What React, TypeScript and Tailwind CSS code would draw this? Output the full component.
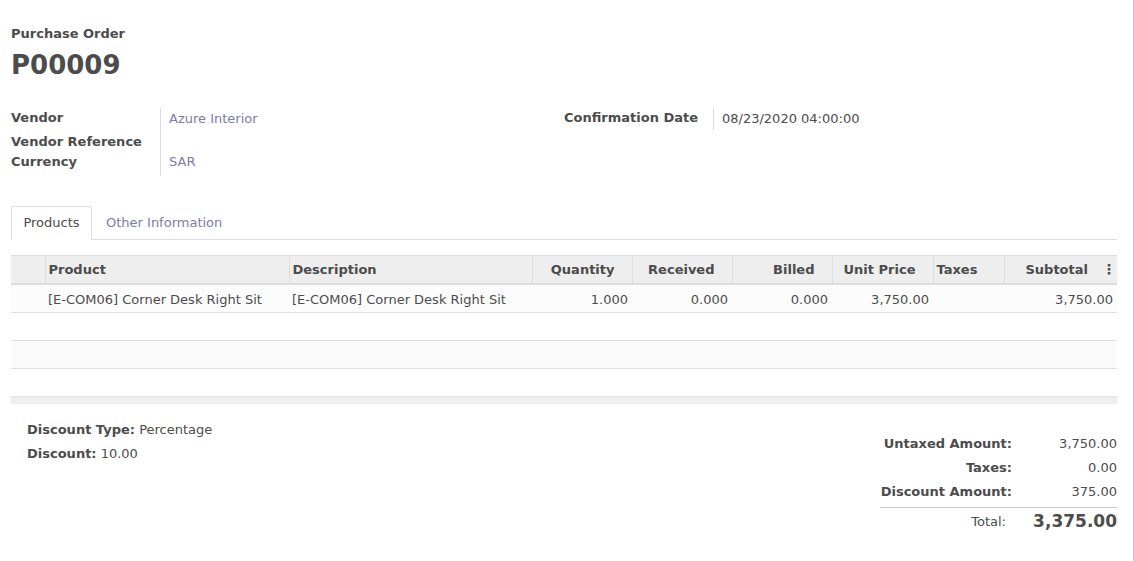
import React from "react";

const cols = [
  { key: "handle", label: "", w: "w-[34px]", align: "left" },
  { key: "product", label: "Product", w: "w-[244px]", align: "left" },
  { key: "description", label: "Description", w: "w-[243px]", align: "left" },
  { key: "qty", label: "Quantity", w: "w-[100px]", align: "right" },
  { key: "received", label: "Received", w: "w-[100px]", align: "right" },
  { key: "billed", label: "Billed", w: "w-[100px]", align: "right" },
  { key: "price", label: "Unit Price", w: "w-[101px]", align: "right" },
  { key: "taxes", label: "Taxes", w: "w-[71px]", align: "left" },
  { key: "subtotal", label: "Subtotal", w: "w-[113px]", align: "right" },
];

const line: Record<string, string> = {
  handle: "",
  product: "[E-COM06] Corner Desk Right Sit",
  description: "[E-COM06] Corner Desk Right Sit",
  qty: "1.000",
  received: "0.000",
  billed: "0.000",
  price: "3,750.00",
  taxes: "",
  subtotal: "3,750.00",
};

const FieldLabel = ({ children }: { children: React.ReactNode }) => (
  <div className="font-bold text-[#4c4c4c]">{children}</div>
);

const App = () => {
  return (
    <div
      className="min-h-[561px] w-[1134px] border-r border-[#c8c8c8] bg-white text-[13px] text-[#4c4c4c]"
      style={{ fontFamily: '"DejaVu Sans", "Noto Sans", sans-serif' }}
    >
      <div className="pl-[11px] pr-[16px] pt-[25px]">
        {/* title */}
        <div className="font-bold leading-[17px]">Purchase Order</div>
        <h1 className="mt-[8px] text-[26px] font-bold leading-[31px] text-[#4c4c4c]">P00009</h1>

        {/* header fields */}
        <div className="mt-[25px] flex">
          <div className="flex w-[553px]">
            <div className="w-[149px] shrink-0">
              <div className="flex h-[24px] items-center">
                <FieldLabel>Vendor</FieldLabel>
              </div>
              <div className="mt-[2px] flex h-[20px] items-center">
                <FieldLabel>Vendor Reference</FieldLabel>
              </div>
              <div className="flex h-[20px] items-center">
                <FieldLabel>Currency</FieldLabel>
              </div>
            </div>
            <div className="mt-[2px] h-[68px] border-l border-[#dcdcdc] pl-[8px]">
              <div className="flex h-[22px] items-center text-[#7c7bad]">Azure Interior</div>
              <div className="mt-[2px] h-[20px]" />
              <div className="flex h-[20px] items-center text-[#7c7bad]">SAR</div>
            </div>
          </div>
          <div className="flex">
            <div className="flex h-[24px] w-[149px] items-center">
              <FieldLabel>Confirmation Date</FieldLabel>
            </div>
            <div className="mt-[2px] flex h-[22px] items-center border-l border-[#dcdcdc] pl-[8px]">
              08/23/2020 04:00:00
            </div>
          </div>
        </div>

        {/* tabs */}
        <div className="mt-[30px] flex h-[34px] items-end border-b border-[#dddddd]">
          <div className="-mb-px flex h-[34px] w-[81px] items-center justify-center rounded-t-[3px] border border-b-white border-[#dddddd] bg-white">
            Products
          </div>
          <div className="flex h-[33px] items-center px-[14px] text-[#7c7bad]">Other Information</div>
        </div>

        {/* order lines */}
        <table className="mt-[15px] w-[1106px] table-fixed border-collapse">
          <thead>
            <tr className="h-[28px] border-t border-b-2 border-[#dcdcdc] bg-[#eeeeee]">
              {cols.map((c) => (
                <th
                  key={c.key}
                  className={`${c.w} border-l border-[#dddddd] px-[3px] font-bold first:border-l-0 ${
                    c.align === "right" ? "pr-[17px] text-right" : "text-left"
                  }`}
                >
                  {c.key === "subtotal" ? (
                    <div className="relative">
                      <span className="mr-[12px]">{c.label}</span>
                      <span className="absolute right-[-16px] top-[-1px] text-[14px] font-bold">⋮</span>
                    </div>
                  ) : (
                    c.label
                  )}
                </th>
              ))}
            </tr>
          </thead>
          <tbody>
            <tr className="h-[29px] border-b border-[#dee2e6] bg-[#fcfcfc]">
              {cols.map((c) => (
                <td
                  key={c.key}
                  className={`px-[3px] pt-[3px] ${c.align === "right" ? "pr-[4px] text-right" : "text-left"}`}
                >
                  {line[c.key]}
                </td>
              ))}
            </tr>
            <tr className="h-[28px] border-b border-[#dee2e6] bg-white">
              <td colSpan={9} />
            </tr>
            <tr className="h-[28px] border-b border-[#dee2e6] bg-[#fafafa]">
              <td colSpan={9} />
            </tr>
            <tr className="h-[28px] border-b border-[#dee2e6] bg-white">
              <td colSpan={9} />
            </tr>
          </tbody>
          <tfoot>
            <tr className="h-[7px] bg-[#eeeeee]">
              <td colSpan={9} />
            </tr>
          </tfoot>
        </table>

        {/* footer */}
        <div className="flex justify-between">
          <div className="pl-[16px] pt-[18px]">
            <div className="leading-[16px]">
              <span className="font-bold">Discount Type:</span> Percentage
            </div>
            <div className="mt-[8px] leading-[16px]">
              <span className="font-bold">Discount:</span> 10.00
            </div>
          </div>
          <div className="w-[237px] pt-[28px]">
            <div className="flex h-[24px] items-center justify-between">
              <span className="w-[132px] text-right font-bold">Untaxed Amount:</span>
              <span>3,750.00</span>
            </div>
            <div className="flex h-[24px] items-center justify-between">
              <span className="w-[132px] text-right font-bold">Taxes:</span>
              <span>0.00</span>
            </div>
            <div className="flex h-[25px] items-center justify-between">
              <span className="w-[132px] text-right font-bold">Discount Amount:</span>
              <span>375.00</span>
            </div>
            <div className="mt-[2px] flex h-[27px] items-center justify-between border-t border-[#cccccc] pt-[3px]">
              <span className="w-[126px] text-right">Total:</span>
              <span className="text-[17px] font-bold">3,375.00</span>
            </div>
          </div>
        </div>
      </div>
    </div>
  );
};

export default App;
